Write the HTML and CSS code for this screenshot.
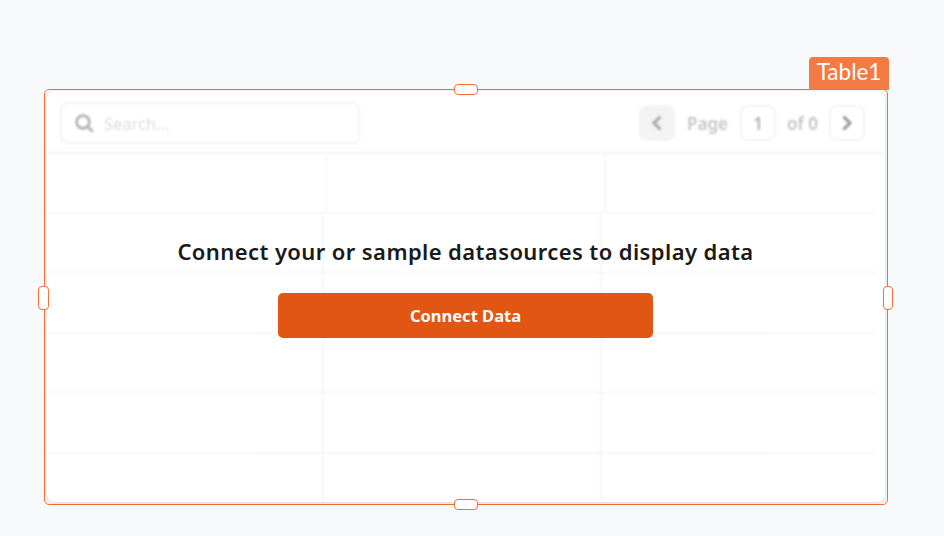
FILE: index.html
```html
<!DOCTYPE html>
<html lang="en">
<head>
<meta charset="UTF-8">
<meta name="viewport" content="width=device-width, initial-scale=1.0">
<title>Table1</title>
<link rel="stylesheet" href="styles.css">
</head>
<body>

<div class="widget">
    <div class="widget-label">Table1</div>

    <span class="handle handle-top"></span>
    <span class="handle handle-bottom"></span>
    <span class="handle handle-left"></span>
    <span class="handle handle-right"></span>

    <div class="card">
        <!-- Blurred table behind the prompt -->
        <div class="table">
            <div class="toolbar">
                <div class="search">
                    <svg class="search-icon" width="20" height="20" viewBox="0 0 20 20" fill="none" stroke="#a8a8a8" stroke-width="2.6">
                        <circle cx="9" cy="9" r="6.4"/>
                        <path d="M13.5 13.5 L18 18" stroke-linecap="round"/>
                    </svg>
                    <span class="search-text">Search...</span>
                </div>
                <div class="pager">
                    <span class="page-btn page-btn-off">
                        <svg width="12" height="18" viewBox="0 0 12 18" fill="none" stroke="#a0a0a0" stroke-width="3"><path d="M9.5 2.5 L3 9 L9.5 15.5"/></svg>
                    </span>
                    <span class="page-text page-word">Page</span>
                    <span class="page-btn page-num">1</span>
                    <span class="page-text page-of">of 0</span>
                    <span class="page-btn">
                        <svg width="12" height="18" viewBox="0 0 12 18" fill="none" stroke="#8c8c8c" stroke-width="3"><path d="M2.5 2.5 L9 9 L2.5 15.5"/></svg>
                    </span>
                </div>
            </div>
            <div class="row row-head"><div></div><div></div><div></div></div>
            <div class="row"><div></div><div></div><div></div></div>
            <div class="row"><div></div><div></div><div></div></div>
            <div class="row"><div></div><div></div><div></div></div>
            <div class="row"><div></div><div></div><div></div></div>
            <div class="row row-last"><div></div><div></div><div></div></div>
        </div>

        <div class="prompt">
            <h2 class="prompt-title">Connect your or sample datasources to display data</h2>
            <button class="prompt-btn">Connect Data</button>
        </div>
    </div>
</div>

</body>
</html>
```

FILE: styles.css
```css
/* Page */
html, body {
    height: 100%;
}
body {
    margin: 0;
    padding: 89px 0 0 44px;
    box-sizing: border-box;
    overflow: hidden;
    background-color: #F8F9FB;
    font-family: 'Noto Sans', 'Open Sans', sans-serif;
}

/* Selected widget frame */
.widget {
    position: relative;
    box-sizing: border-box;
    width: 844px;
    height: 416px;
    border: 1px solid #F4703A;
    border-radius: 5px;
    padding: 1px 2px 2px 2px;
}
.widget-label {
    position: absolute;
    top: -33px;
    right: -2px;
    width: 80px;
    height: 33px;
    box-sizing: border-box;
    padding-top: 1px;
    background-color: #F27A43;
    border-radius: 4px 4px 0 0;
    color: #FFFFFF;
    font-family: 'Lato', sans-serif;
    font-size: 22.5px;
    line-height: 28px;
    text-align: center;
}

/* Resize handles */
.handle {
    position: absolute;
    z-index: 2;
    box-sizing: border-box;
    background-color: #FFFFFF;
    border: 1px solid #F4703A;
    border-radius: 4px;
}
.handle-top, .handle-bottom {
    left: 409px;
    width: 24px;
    height: 11px;
}
.handle-top { top: -6px; }
.handle-bottom { bottom: -6px; }
.handle-left, .handle-right {
    top: 196px;
    width: 11px;
    height: 24px;
}
.handle-left { left: -7px; }
.handle-right { right: -6px; width: 10px; }

/* Card */
.card {
    position: relative;
    height: 100%;
    background-color: #FFFFFF;
    border-radius: 8px;
    box-shadow: 0 1px 4px rgba(0, 0, 0, 0.14);
    overflow: hidden;
}

/* Blurred table */
.table {
    height: 100%;
    filter: blur(1px);
    opacity: 0.9;
}
.toolbar {
    display: flex;
    justify-content: space-between;
    align-items: center;
    box-sizing: border-box;
    height: 63px;
    padding: 3px 20px 0 13px;
    border-bottom: 2px solid #F3F3F3;
}
.search {
    display: flex;
    align-items: center;
    gap: 10px;
    box-sizing: border-box;
    width: 300px;
    height: 42px;
    padding-left: 12px;
    border: 2px solid #F2F2F2;
    border-radius: 8px;
}
.search-text {
    color: #D4D8DD;
    font-size: 16.5px;
}
.pager {
    display: flex;
    align-items: center;
}
.page-btn {
    display: flex;
    justify-content: center;
    align-items: center;
    box-sizing: border-box;
    width: 36px;
    height: 36px;
    border: 2px solid #F2F2F2;
    border-radius: 8px;
}
.page-btn-off {
    background-color: #F2F2F2;
}
.page-num {
    color: #A8A8A8;
    font-size: 17px;
    font-weight: 600;
}
.page-text {
    color: #BDBDBD;
    font-size: 17px;
    font-weight: 600;
}
.page-word {
    margin: 0 12px;
}
.page-of {
    margin: 0 11px;
}
.row {
    display: grid;
    grid-template-columns: 277px 278px 1fr;
    box-sizing: border-box;
    height: 60px;
    margin-right: 8px;
    border-bottom: 2px solid #F5F5F5;
}
.row div {
    border-right: 2px solid #F5F5F5;
}
.row div:last-child {
    border-right: none;
}
.row-head {
    grid-template-columns: 280px 279px 1fr;
}
.row-last {
    height: 50px;
    border-bottom: none;
}

/* Prompt over the table */
.prompt {
    position: absolute;
    top: 143px;
    left: 0;
    right: 1px;
    display: flex;
    flex-direction: column;
    align-items: center;
}
.prompt-title {
    margin: 0 0 25px;
    color: #1A1A1A;
    font-size: 22px;
    font-weight: 600;
    letter-spacing: 0.4px;
    line-height: 34px;
}
.prompt-btn {
    width: 375px;
    height: 45px;
    border: none;
    border-radius: 5px;
    background-color: #E25614;
    color: #FFFFFF;
    font-family: inherit;
    font-size: 16.5px;
    font-weight: 700;
    cursor: pointer;
}
```
